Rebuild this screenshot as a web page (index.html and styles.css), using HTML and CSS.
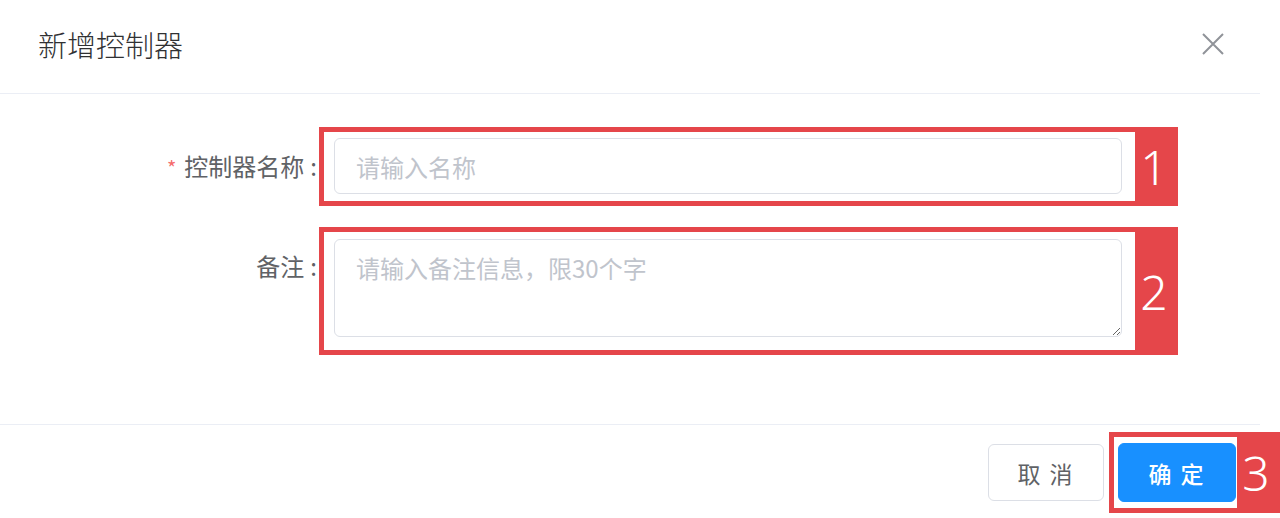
FILE: index.html
```html
<!DOCTYPE html>
<html lang="zh-CN">
<head>
    <meta charset="UTF-8">
    <meta name="viewport" content="width=device-width, initial-scale=1.0">
    <title>新增控制器</title>
    <link rel="stylesheet" href="styles.css">
</head>
<body>

    <!-- Dialog -->
    <div class="dialog">
        <div class="dialog-header">
            <span class="dialog-title">新增控制器</span>
            <button class="close-btn" aria-label="关闭">
                <svg width="22" height="22" viewBox="0 0 22 22">
                    <path d="M1 1 L21 21 M21 1 L1 21" stroke="#909399" stroke-width="2" fill="none"/>
                </svg>
            </button>
        </div>

        <div class="dialog-body">
            <div class="form-item">
                <label class="form-label" for="name"><span class="required">*</span>控制器名称<span class="colon">:</span></label>
                <div class="mark">
                    <div class="mark-body">
                        <input type="text" id="name" class="input" placeholder="请输入名称">
                    </div>
                    <div class="mark-tab">1</div>
                </div>
            </div>

            <div class="form-item">
                <label class="form-label" for="remark">备注<span class="colon">:</span></label>
                <div class="mark">
                    <div class="mark-body mark-body-area">
                        <textarea id="remark" class="textarea" placeholder="请输入备注信息，限30个字"></textarea>
                    </div>
                    <div class="mark-tab">2</div>
                </div>
            </div>
        </div>

        <div class="dialog-footer">
            <button class="btn">取 消</button>
            <div class="mark mark-footer">
                <div class="mark-body mark-body-btn">
                    <button class="btn btn-primary">确 定</button>
                </div>
                <div class="mark-tab">3</div>
            </div>
        </div>
    </div>

</body>
</html>
```

FILE: styles.css
```css
/* Page */
body {
    margin: 0;
    background: #fff;
    font-family: "Noto Sans CJK SC", "Noto Sans", sans-serif;
    overflow: hidden;
}

/* Dialog */
.dialog {
    width: 1260px;
}

.dialog-header {
    display: flex;
    justify-content: space-between;
    align-items: center;
    height: 94px;
    padding: 0 36px 0 38px;
    border-bottom: 1px solid #ebeef5;
    box-sizing: border-box;
}

.dialog-title {
    font-size: 29px;
    font-weight: 300;
    color: #303133;
    line-height: 1;
    margin-top: -4px;
}

.close-btn {
    background: none;
    border: none;
    padding: 0;
    width: 22px;
    height: 22px;
    margin-top: -5px;
    cursor: pointer;
}

.dialog-body {
    padding: 33px 0 69px;
}

.form-item {
    display: flex;
    align-items: flex-start;
    margin-bottom: 21px;
}

.form-item:last-child {
    margin-bottom: 0;
}

.form-label {
    width: 319px;
    padding-right: 2px;
    box-sizing: border-box;
    text-align: right;
    font-size: 24px;
    color: #606266;
    line-height: 56px;
    margin-top: 11px;
}

.colon {
    margin-left: 6px;
}

.required {
    color: #f56c6c;
    font-size: 20px;
    margin-right: 8px;
}

/* Red annotation boxes */
.mark {
    display: flex;
    border: 5px solid #e5464a;
    width: 859px;
    box-sizing: border-box;
}

.mark-body {
    flex: 1;
    background: #fff;
    padding: 6px 13px 7px 10px;
}

.mark-body-area {
    padding: 7px 13px 13px 10px;
}

.mark-tab {
    width: 38px;
    background: #e5464a;
    color: #fff;
    font-family: "Noto Sans", sans-serif;
    font-weight: 300;
    font-size: 48px;
    display: flex;
    align-items: center;
    justify-content: center;
}

.input,
.textarea {
    display: block;
    width: 100%;
    box-sizing: border-box;
    border: 1px solid #dcdfe6;
    border-radius: 6px;
    font-family: "Noto Sans CJK SC", sans-serif;
    font-size: 24px;
    color: #606266;
    padding: 0 21px;
    outline: none;
}

.input {
    height: 56px;
}

.textarea {
    height: 98px;
    padding-top: 10px;
    line-height: 36px;
    resize: vertical;
}

.input::placeholder,
.textarea::placeholder {
    color: #c0c4cc;
}

/* Footer */
.dialog-footer {
    display: flex;
    justify-content: flex-end;
    align-items: center;
    border-top: 1px solid #ebeef5;
    padding-top: 7px;
}

.mark-footer {
    width: 171px;
    margin-left: 5px;
    margin-right: -20px;
}

.mark-body-btn {
    padding: 6px 1px 6px 4px;
}

.btn {
    width: 116px;
    height: 57px;
    background: #fff;
    border: 1px solid #dcdfe6;
    border-radius: 6px;
    font-family: "Noto Sans CJK SC", sans-serif;
    font-size: 23px;
    color: #606266;
    letter-spacing: 2px;
    cursor: pointer;
}

.btn-primary {
    display: block;
    width: 118px;
    height: 59px;
    background: #1890ff;
    border-color: #1890ff;
    color: #fff;
    font-weight: 500;
}
```
